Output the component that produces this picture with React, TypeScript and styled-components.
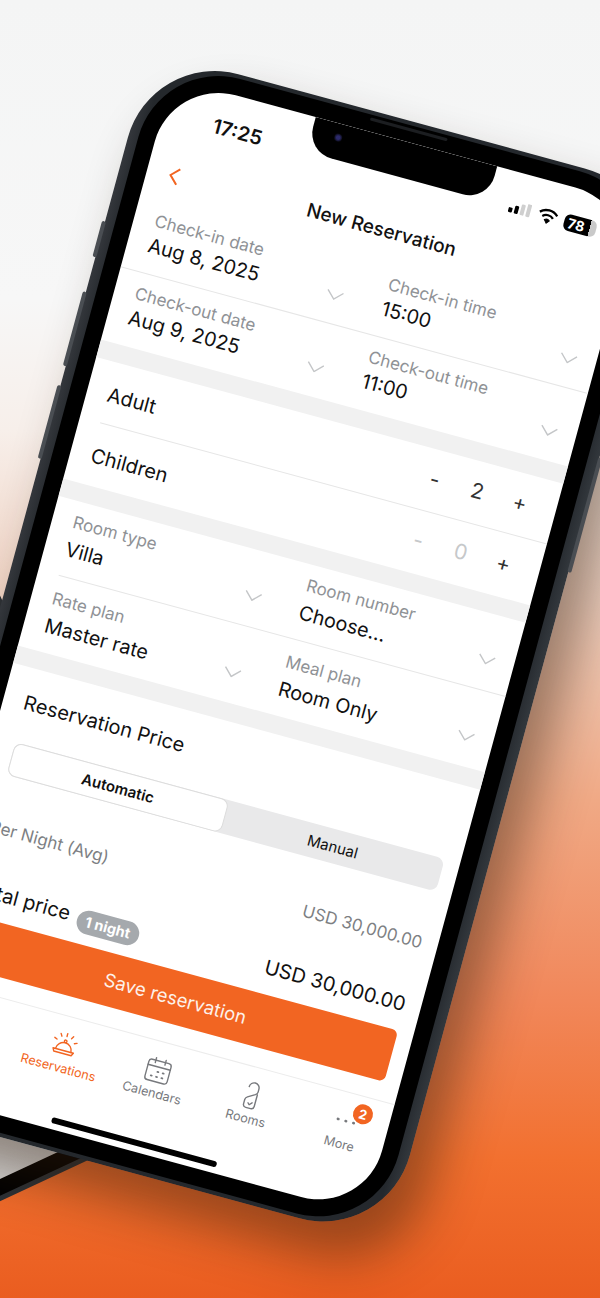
import React from 'react';
import styled, { createGlobalStyle } from 'styled-components';

const ORANGE = '#f26522';
const FONT = 'Inter, "Liberation Sans", sans-serif';

const GlobalStyle = createGlobalStyle`
  html, body {
    margin: 0;
    padding: 0;
    background: #f4f4f4;
  }
  * {
    box-sizing: border-box;
  }
`;

const Stage = styled.div`
  position: relative;
  width: 600px;
  height: 1298px;
  overflow: hidden;
  font-family: ${FONT};
  background: linear-gradient(
    180deg,
    #f4f5f5 0,
    #f7f7f7 300px,
    #f7efea 430px,
    #f0d2c2 600px,
    #f0a985 800px,
    #f1875a 1000px,
    #f2702f 1160px,
    #ea5d20 1298px
  );
`;

const BackPhone = styled.div`
  position: absolute;
  left: -268px;
  top: 93px;
  width: 500px;
  height: 1000px;
  padding: 5px;
  border-radius: 70px;
  background: #2c3136;
  transform: rotate(-25deg);
  transform-origin: 100% 100%;
`;

const BackBezel = styled.div`
  height: 100%;
  padding: 15px;
  border-radius: 64px;
  background: #000;
`;

const BackScreen = styled.div`
  height: 100%;
  border-radius: 46px;
  background: linear-gradient(115deg, #c4c4c4 0 30%, #dcdcdc 60%, #d4d4d4);
`;

const Shell = styled.div`
  position: absolute;
  left: 145px;
  top: 57.4px;
  padding: 4px 11px 4px 10px;
  border-radius: 90px;
  background: linear-gradient(90deg, #34373c, #24282c 3%, #24282d 97%, #33383d);
  transform: rotate(15.2deg);
  transform-origin: 27px 21px;
  box-shadow: 26px 30px 50px rgba(50, 28, 10, 0.45);
`;

const SideButton = styled.span<{ $side: 'left' | 'right'; $top: number; $height: number }>`
  position: absolute;
  ${(p) => p.$side}: -3px;
  top: ${(p) => p.$top}px;
  width: 4px;
  height: ${(p) => p.$height}px;
  border-radius: 2px;
  background: #4a4e53;
`;

const Bezel = styled.div`
  position: relative;
  padding: 17px;
  border-radius: 83px;
  background: #000;
`;

const Speaker = styled.span`
  position: absolute;
  left: 219px;
  top: 3px;
  width: 80px;
  height: 3px;
  border-radius: 2px;
  background: #1c1e21;
`;

const Screen = styled.div`
  position: relative;
  display: flex;
  flex-direction: column;
  width: 484px;
  height: 1046px;
  overflow: hidden;
  border-radius: 66px;
  background: #fff;
  color: #111;
`;

const Notch = styled.div`
  position: absolute;
  left: 149px;
  top: 0;
  width: 188px;
  height: 36px;
  border-radius: 0 0 26px 26px;
  background: #000;
`;

const Camera = styled.span`
  position: absolute;
  left: 23px;
  top: 10px;
  width: 8px;
  height: 8px;
  border-radius: 50%;
  background: radial-gradient(circle, #2c2a6b 0 30%, #0b0b18 70%);
`;

const StatusBar = styled.div`
  display: flex;
  align-items: center;
  justify-content: space-between;
  height: 70px;
  padding: 0 35px 0 52px;
`;

const Clock = styled.span`
  font-size: 20px;
  font-weight: 600;
  line-height: 70px;
`;

const StatusIcons = styled.div`
  display: flex;
  align-items: center;
  gap: 7px;
`;

const Battery = styled.span`
  display: block;
  width: 33px;
  height: 17px;
  padding-left: 4px;
  border-radius: 6px;
  background: linear-gradient(90deg, #000 0 80%, #c9c9c9 80%);
  color: #fff;
  font-size: 14px;
  font-weight: 700;
  line-height: 17px;
`;

const Header = styled.div`
  display: grid;
  grid-template-columns: 1fr auto 1fr;
  align-items: center;
  height: 51px;
  padding: 0 20px;
`;

const BackIcon = styled.svg`
  display: block;
  width: 14px;
  height: 20px;
  margin: 0 0 4px 1px;
  fill: none;
  stroke: ${ORANGE};
  stroke-width: 2;
`;

const Title = styled.h1`
  margin: 0 0 8px;
  font-size: 19px;
  font-weight: 500;
  line-height: 30px;
`;

const FieldRow = styled.div<{ $top: number; $height: number; $divider?: 'full' | 'inset' }>`
  position: relative;
  display: grid;
  grid-template-columns: 1fr 1fr;
  height: ${(p) => p.$height}px;
  padding-top: ${(p) => p.$top}px;

  ${(p) =>
    p.$divider &&
    `&::after {
      content: '';
      position: absolute;
      left: ${p.$divider === 'full' ? 0 : 21}px;
      right: 0;
      bottom: 0;
      height: 1px;
      background: #e6e6e6;
    }`}
`;

const FieldCell = styled.div`
  display: flex;
  align-items: flex-start;
  justify-content: space-between;
  padding: 0 19px 0 21px;
`;

const FieldLabel = styled.div`
  color: #8f9296;
  font-size: 17px;
  line-height: 24px;
`;

const FieldValue = styled.div<{ $gap?: number }>`
  margin-top: ${(p) => p.$gap ?? 0}px;
  color: #111;
  font-size: 19.8px;
  line-height: 26px;
  white-space: nowrap;
`;

const ChevronBox = styled.svg`
  display: block;
  flex: none;
  width: 18px;
  height: 10px;
  margin-top: 32px;
  fill: none;
  stroke: #c4c6c8;
  stroke-width: 1.4;
`;

const Band = styled.div`
  height: 18px;
  background: #f1f1f1;
`;

const CountRow = styled.div<{ $height: number; $inset?: boolean }>`
  display: flex;
  align-items: center;
  justify-content: space-between;
  height: ${(p) => p.$height}px;
  margin-left: 21px;
  padding-right: 15px;
  ${(p) => p.$inset && 'border-bottom: 1px solid #e6e6e6;'}
`;

const CountName = styled.div`
  font-size: 20px;
  padding-top: 3px;
`;

const Stepper = styled.div`
  display: grid;
  grid-template-columns: repeat(3, 44px);
  margin-bottom: 4px;
  text-align: center;
  font-size: 21px;
`;

const StepPart = styled.span<{ $muted?: boolean }>`
  color: ${(p) => (p.$muted ? '#c6c8ca' : '#333')};
`;

const PriceSection = styled.div`
  display: flex;
  flex-direction: column;
  padding: 22px 16px 0 21px;
`;

const PriceTitle = styled.div`
  font-size: 20px;
  line-height: 26px;
`;

const Segments = styled.div`
  display: grid;
  grid-template-columns: 222px 1fr;
  height: 34px;
  margin: 28px 0 0 2px;
  border-radius: 8px;
  background: #e9e9ea;
`;

const Segment = styled.div<{ $active?: boolean }>`
  display: flex;
  align-items: center;
  justify-content: center;
  border-radius: 8px;
  font-size: 15px;
  font-weight: ${(p) => (p.$active ? 600 : 400)};
  ${(p) => p.$active && 'background: #fff; border: 1.5px solid #dcdcdc;'}
`;

const PriceRow = styled.div<{ $top: number }>`
  display: flex;
  align-items: center;
  justify-content: space-between;
  height: 24px;
  margin-top: ${(p) => p.$top}px;
`;

const PriceName = styled.div<{ $muted?: boolean }>`
  display: flex;
  align-items: center;
  gap: 8px;
  color: ${(p) => (p.$muted ? '#7d7f83' : '#111')};
  font-size: ${(p) => (p.$muted ? 17 : 20)}px;
`;

const NightBadge = styled.span`
  margin-top: 8px;
  padding: 0 9px;
  border-radius: 12px;
  background: #a5a9ad;
  color: #fff;
  font-size: 14.5px;
  font-weight: 700;
  line-height: 24px;
`;

const PriceValue = styled.div<{ $muted?: boolean }>`
  color: ${(p) => (p.$muted ? '#7d7f83' : '#111')};
  font-size: ${(p) => (p.$muted ? 17 : 20)}px;
  white-space: nowrap;
`;

const SaveButton = styled.button`
  display: block;
  height: 53px;
  margin: 15px 0 0;
  padding: 0;
  border: 0;
  border-radius: 6px;
  background: ${ORANGE};
  color: #fdf1ea;
  font-family: ${FONT};
  font-size: 18.5px;
`;

const TabBar = styled.nav`
  display: grid;
  grid-template-columns: repeat(5, 97px);
  margin-top: 19px;
  padding: 13px 0 0 4px;
  border-top: 1px solid #ececec;
`;

const Tab = styled.div<{ $active?: boolean }>`
  position: relative;
  display: flex;
  flex-direction: column;
  align-items: center;
  gap: 1px;
  color: ${(p) => (p.$active ? ORANGE : '#77797d')};
  font-size: 12.6px;
  line-height: 16px;
`;

const TabIcon = styled.svg`
  display: block;
  width: 30px;
  height: 30px;
  fill: none;
  stroke: currentColor;
  stroke-width: 1.4;
  stroke-linecap: round;
  stroke-linejoin: round;
`;

const CountBadge = styled.span`
  position: absolute;
  left: 54px;
  top: -6px;
  width: 20px;
  height: 20px;
  border-radius: 50%;
  background: ${ORANGE};
  color: #fff;
  font-size: 13px;
  font-weight: 700;
  line-height: 20px;
  text-align: center;
`;

const HomeIndicator = styled.div`
  width: 171px;
  height: 6px;
  margin: auto auto 6px;
  border-radius: 3px;
  background: #000;
`;

function Chevron() {
  return (
    <ChevronBox viewBox="0 0 18 10">
      <polyline points="1,1 9,9 17,1" />
    </ChevronBox>
  );
}

function Field({ label, value, gap }: { label: string; value: string; gap?: number }) {
  return (
    <FieldCell>
      <div>
        <FieldLabel>{label}</FieldLabel>
        <FieldValue $gap={gap}>{value}</FieldValue>
      </div>
      <Chevron />
    </FieldCell>
  );
}

export default function App() {
  return (
    <Stage>
      <GlobalStyle />
      <BackPhone>
        <BackBezel>
          <BackScreen />
        </BackBezel>
      </BackPhone>

      <Shell>
        <SideButton $side="left" $top={177} $height={37} />
        <SideButton $side="left" $top={250} $height={77} />
        <SideButton $side="left" $top={347} $height={76} />
        <SideButton $side="right" $top={275} $height={119} />
        <Bezel>
          <Speaker />
          <Screen>
            <Notch>
              <Camera />
            </Notch>
            <StatusBar>
              <Clock>17:25</Clock>
              <StatusIcons>
                <svg width="24" height="14" viewBox="0 0 24 14">
                  <rect x="1" y="8" width="4" height="5" rx="1" fill="#000" />
                  <rect x="7" y="5" width="4" height="8" rx="1" fill="#000" />
                  <rect x="13" y="2" width="4" height="11" rx="1" fill="#cfcfcf" />
                  <rect x="19" y="0" width="4" height="13" rx="1" fill="#cfcfcf" />
                </svg>
                <svg width="20" height="16" viewBox="0 0 20 16" fill="none" stroke="#000" strokeWidth="2.3">
                  <path d="M1 5.5a13 13 0 0 1 18 0" />
                  <path d="M4.5 9a8 8 0 0 1 11 0" />
                  <path d="M10 15l-2.6-3a4 4 0 0 1 5.2 0z" fill="#000" strokeWidth="1" />
                </svg>
                <Battery>78</Battery>
              </StatusIcons>
            </StatusBar>
            <Header>
              <BackIcon viewBox="0 0 14 20">
                <polyline points="11,2 3,10 11,18" />
              </BackIcon>
              <Title>New Reservation</Title>
              <span />
            </Header>

            <FieldRow $top={9} $height={75} $divider="full">
              <Field label="Check-in date" value="Aug 8, 2025" />
              <Field label="Check-in time" value="15:00" />
            </FieldRow>
            <FieldRow $top={9} $height={75}>
              <Field label="Check-out date" value="Aug 9, 2025" />
              <Field label="Check-out time" value="11:00" />
            </FieldRow>
            <Band />
            <CountRow $height={63} $inset>
              <CountName>Adult</CountName>
              <Stepper>
                <StepPart>-</StepPart>
                <StepPart>2</StepPart>
                <StepPart>+</StepPart>
              </Stepper>
            </CountRow>
            <CountRow $height={63}>
              <CountName>Children</CountName>
              <Stepper>
                <StepPart $muted>-</StepPart>
                <StepPart $muted>0</StepPart>
                <StepPart>+</StepPart>
              </Stepper>
            </CountRow>
            <Band />
            <FieldRow $top={9} $height={77} $divider="inset">
              <Field label="Room type" value="Villa" gap={3} />
              <Field label="Room number" value="Choose..." gap={3} />
            </FieldRow>
            <FieldRow $top={11} $height={78}>
              <Field label="Rate plan" value="Master rate" gap={3} />
              <Field label="Meal plan" value="Room Only" gap={3} />
            </FieldRow>
            <Band />

            <PriceSection>
              <PriceTitle>Reservation Price</PriceTitle>
              <Segments>
                <Segment $active>Automatic</Segment>
                <Segment>Manual</Segment>
              </Segments>
              <PriceRow $top={41}>
                <PriceName $muted>Per Night (Avg)</PriceName>
                <PriceValue $muted>USD 30,000.00</PriceValue>
              </PriceRow>
              <PriceRow $top={40}>
                <PriceName>
                  Total price <NightBadge>1 night</NightBadge>
                </PriceName>
                <PriceValue>USD 30,000.00</PriceValue>
              </PriceRow>
              <SaveButton>Save reservation</SaveButton>
            </PriceSection>

            <TabBar>
              <span />
              <Tab $active>
                <TabIcon viewBox="0 0 30 30">
                  <path d="M7 21a8 8 0 0 1 16 0" />
                  <path d="M4.5 21h21l-1.5 3H6z" />
                  <circle cx="15" cy="11.5" r="1.3" />
                  <path d="M15 3.5v3M8.5 5l1.5 2.5M21.5 5L20 7.5M3.5 10.5l2.5 1M26.5 10.5l-2.5 1" />
                </TabIcon>
                Reservations
              </Tab>
              <Tab>
                <TabIcon viewBox="0 0 30 30">
                  <rect x="3.5" y="6" width="23" height="21" rx="3" />
                  <path d="M3.5 12h23M10 3.5v5M20 3.5v5" />
                  <path d="M14.5 17h1M20 17h1M9 22h1M14.5 22h1M20 22h1" strokeWidth="1.8" />
                </TabIcon>
                Calendars
              </Tab>
              <Tab>
                <TabIcon viewBox="0 0 30 30">
                  <path d="M10 7a5 5 0 0 1 10 0v3c0 1.5-.8 2.4-2 3.2l-7 4.3c-1.3.8-2 1.8-2 3.2V25a3 3 0 0 0 3 3h5a3 3 0 0 0 3-3V13" />
                  <path d="M13 23l1.6 1.6 2.4-2.6" />
                </TabIcon>
                Rooms
              </Tab>
              <Tab>
                <TabIcon viewBox="0 0 30 30">
                  <path d="M7 15h.5M15 15h.5M23 15h.5" strokeWidth="2.6" />
                </TabIcon>
                <CountBadge>2</CountBadge>
                More
              </Tab>
            </TabBar>
            <HomeIndicator />
          </Screen>
        </Bezel>
      </Shell>
    </Stage>
  );
}
